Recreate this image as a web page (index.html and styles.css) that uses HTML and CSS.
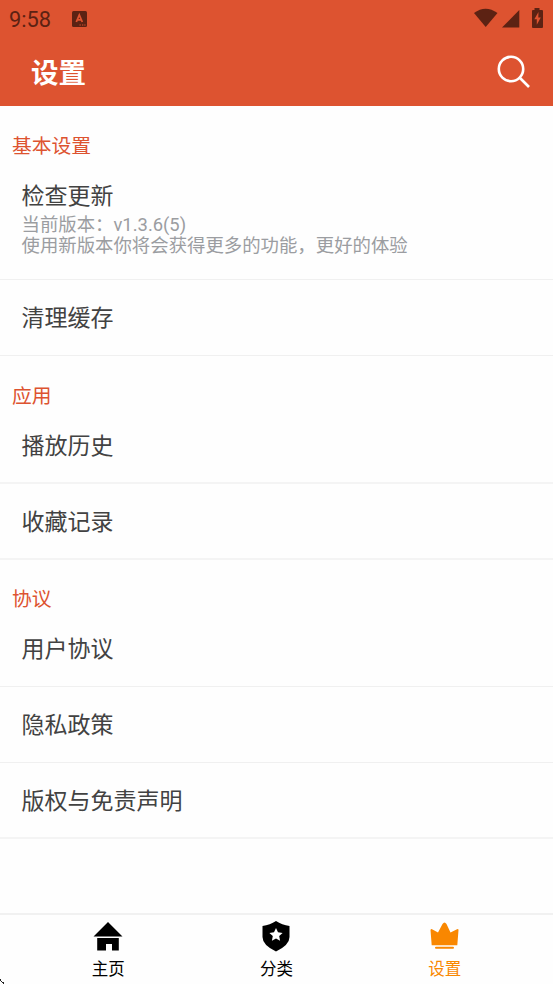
FILE: index.html
```html
<!DOCTYPE html>
<html lang="zh-CN">
<head>
<meta charset="utf-8">
<title>设置</title>
<link rel="stylesheet" href="styles.css">
</head>
<body>
<header class="header">
  <div class="status">
    <span class="time">9:58</span>
    <svg class="keyboard" width="15" height="16" viewBox="0 0 15 16"><rect width="15" height="16" rx="1.5" fill="#5c2213"/><path d="M4.3 11 7.3 4 10.3 11M5.3 8.8h4" fill="none" stroke="#dd5330" stroke-width="1.8"/><path d="M7.5 14h1.3M10 14h1.3M12.3 14h1.2" stroke="#dd5330" stroke-width="1"/></svg>
    <svg class="signals" width="71" height="22" viewBox="0 0 71 22"><g fill="#5c2213"><path d="M1 6Q12.500-2.5 24.500 6L12.700 20Z"/><path d="M29 20.500 46.300 3v17.500Z"/><path d="M61.500 1h5v2h2.500q1 0 1 1v16q0 1-1 1H60q-1 0-1-1V4q0-1 1-1h1.500Z"/></g><path d="m65.500 5-4.2 7.3h2.5v5.5l4-7.4h-2.5Z" fill="#dd5330"/></svg>
  </div>
  <div class="toolbar">
    <h1 class="title">设置</h1>
    <svg class="search" width="34" height="34" viewBox="0 0 34 34" fill="none" stroke="#fff" stroke-width="2.6"><circle cx="14" cy="14" r="12.2"/><path d="m22.5 22.5 9.5 9.5"/></svg>
  </div>
</header>
<main class="content">
  <section class="section">
    <h2 class="heading">基本设置</h2>
    <div class="row update">
      <div class="label">检查更新</div>
      <div class="detail">当前版本：v1.3.6(5)</div>
      <div class="detail">使用新版本你将会获得更多的功能，更好的体验</div>
    </div>
    <div class="row">清理缓存</div>
  </section>
  <section class="section">
    <h2 class="heading">应用</h2>
    <div class="row thick">播放历史</div>
    <div class="row thick">收藏记录</div>
  </section>
  <section class="section agreements">
    <h2 class="heading">协议</h2>
    <div class="row">用户协议</div>
    <div class="row">隐私政策</div>
    <div class="row thick">版权与免责声明</div>
  </section>
</main>
<nav class="tabs">
  <div class="tab">
    <svg width="32" height="32" viewBox="0 0 32 32"><path d="M16 2 30.5 16.4H1.5ZM5.2 18h21.6v12.5H20V24h-6v6.5H5.2Z"/></svg>
    <span>主页</span>
  </div>
  <div class="tab">
    <svg width="32" height="32" viewBox="0 0 32 32"><path d="M16 1Q22 5 29.5 6v11Q29.5 25 16 31.5Q2.5 25 2.5 17V6Q10 5 16 1Z"/><path d="m16 8 2 4.3 4.6.6-3.4 3.2.9 4.7-4.1-2.3-4.1 2.3.9-4.700-3.400-3.200 4.600-.6Z" fill="#fff"/></svg>
    <span>分类</span>
  </div>
  <div class="tab active">
    <svg width="32" height="32" viewBox="0 0 32 32" fill="currentColor"><path d="M1.500 10Q2 8.500 3.500 9.500L9 12.500 13.500 4Q15.500 1 17.500 4L21.500 12.500 27.500 9.500Q29.500 8.500 29.500 10L28.300 25.200H2.700Z"/><path d="M7 26.700h17q1 0 1 1t-1 1h-17q-1 0-1-1t1-1Z"/></svg>
    <span>设置</span>
  </div>
</nav>
<svg class="pointer" width="5" height="5" viewBox="0 0 5 5" shape-rendering="crispEdges"><path d="M0 0h1v2H0ZM1 2h1v1H1ZM2 3h2v1H2ZM3 4h1v1H3Z" fill="#222"/></svg>
</body>
</html>
```
FILE: styles.css
```css
* { box-sizing: border-box; }
body {
  margin: 0;
  height: 984px;
  display: flex;
  flex-direction: column;
  overflow: hidden;
  background: #fefefe;
  color: #424242;
  font-family: Roboto, "Noto Sans CJK SC", sans-serif;
}
h1, h2 { margin: 0; }
svg { display: block; flex: none; }
.header { height: 106px; flex: none; background: #dd5330; }
.status {
  height: 38px;
  display: flex;
  align-items: center;
  padding: 0 9px;
}
.time { width: 63px; padding-top: 2px; font-size: 21.8px; line-height: 38px; color: #5c2213; }
.keyboard { margin-top: -1px; }
.signals { margin-left: auto; margin-top: -3px; }
.toolbar {
  height: 68px;
  display: flex;
  align-items: center;
  justify-content: space-between;
  padding: 0 22px 0 31px;
}
.title { padding-top: 3px; font-size: 27.5px; line-height: 40px; font-weight: 700; color: #fff; }
.heading {
  height: 52px;
  padding: 26px 0 0 12px;
  font-size: 19.8px;
  line-height: 30px;
  font-weight: 400;
  color: #dd5330;
}
.agreements .heading { height: 51px; padding-top: 25px; }
.row {
  height: 76px;
  padding-left: 21.5px;
  border-bottom: 1px solid #f0f0f0;
  font-size: 23px;
  line-height: 78px;
}
.agreements .row { line-height: 77px; }
.thick { border-bottom: 2px solid #f4f4f4; }
.update { height: 122px; padding-top: 22px; }
.row .label { line-height: 34px; }
.detail { font-size: 18.4px; line-height: 21px; color: #9b9da1; }
.content { flex: 1; }
.tabs {
  height: 71px;
  flex: none;
  display: flex;
  padding: 0 24px;
  border-top: 2px solid #f1f1f1;
  color: #000;
}
.tab {
  flex: 1;
  display: flex;
  flex-direction: column;
  align-items: center;
  padding-top: 5px;
  font-size: 16.5px;
  line-height: 28px;
}
.tab span { margin-top: 4px; }
.active { color: #f98700; }
.pointer { position: absolute; left: 0; bottom: 0; }
```
